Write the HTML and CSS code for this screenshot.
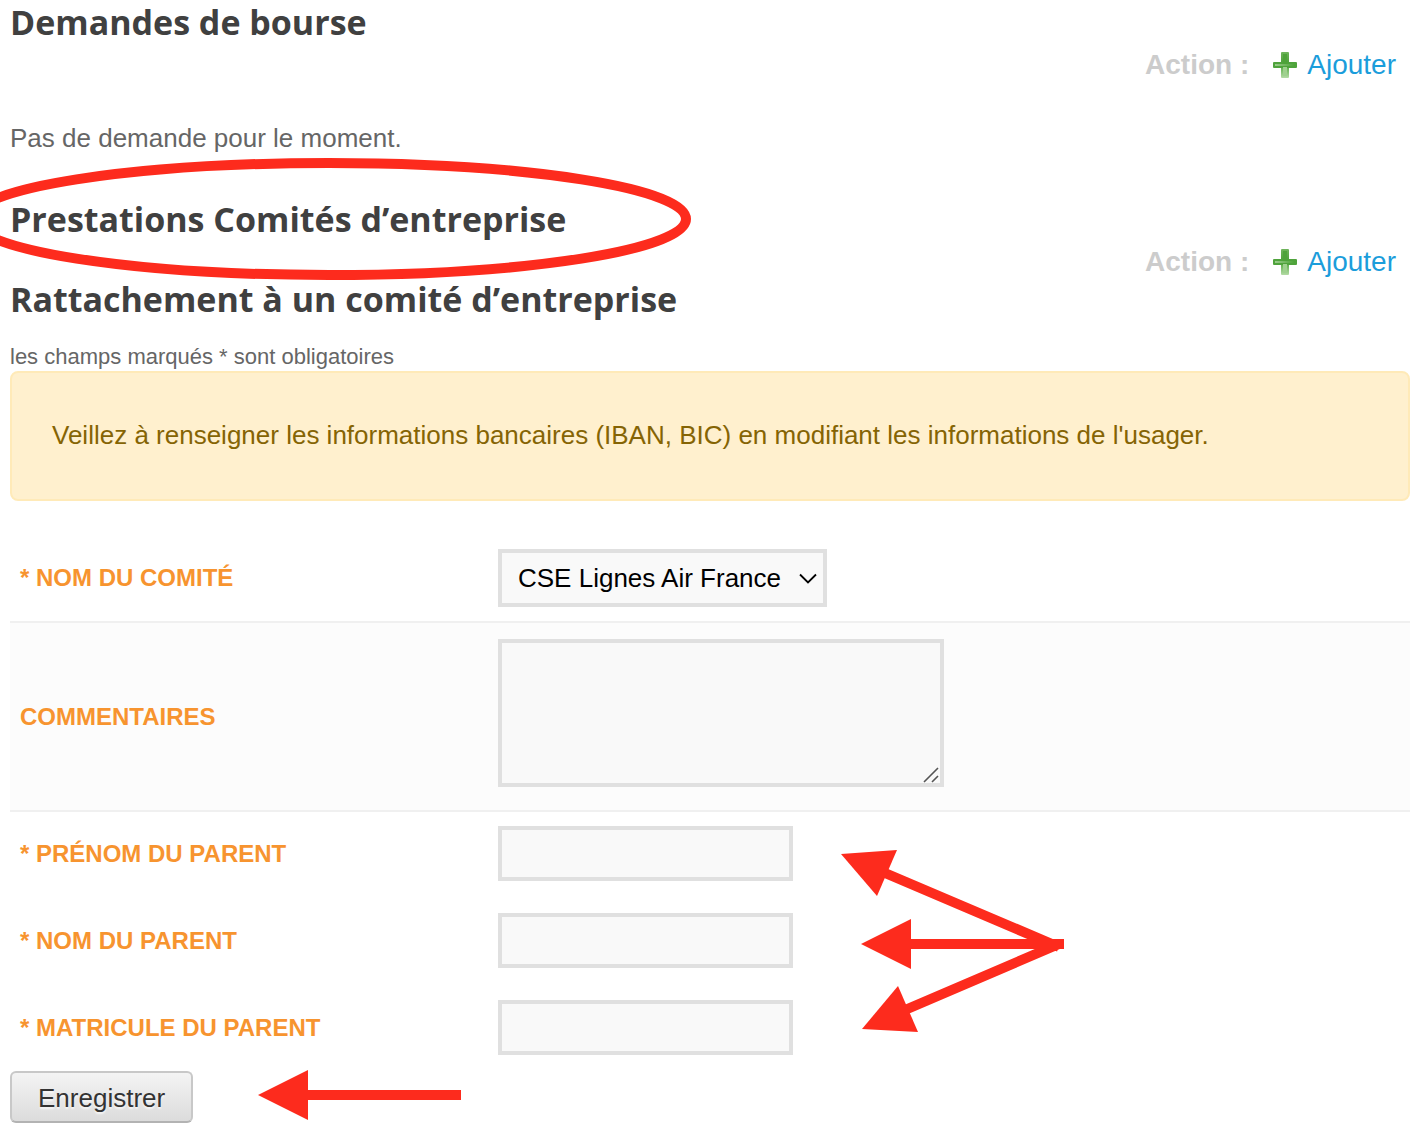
FILE: index.html
```html
<!DOCTYPE html>
<html lang="fr">
<head>
    <meta charset="UTF-8">
    <meta name="viewport" content="width=device-width, initial-scale=1.0">
    <title>Prestations Comités d’entreprise</title>
    <link rel="stylesheet" href="styles.css">
</head>
<body>
    <svg class="icon-defs" aria-hidden="true">
        <defs>
            <linearGradient id="plus-v" x1="0" y1="0" x2="0" y2="1">
                <stop offset="0" stop-color="#6fb45c"/>
                <stop offset="0.4" stop-color="#4ea23a"/>
                <stop offset="0.65" stop-color="#6cb659"/>
                <stop offset="1" stop-color="#b4dba6"/>
            </linearGradient>
            <linearGradient id="plus-h" x1="0" y1="0" x2="1" y2="0">
                <stop offset="0" stop-color="#9acb8b"/>
                <stop offset="1" stop-color="#4aa336"/>
            </linearGradient>
            <symbol id="icon-plus" viewBox="0 0 24 26">
                <rect x="8" y="0" width="8" height="26" rx="1" fill="url(#plus-v)"/>
                <rect x="0" y="10" width="24" height="6" rx="1" fill="#4fa33c"/>
                <rect x="2" y="12" width="20" height="2" fill="url(#plus-h)"/>
                <rect x="10" y="2" width="4" height="10" fill="#4ea23a"/>
                <rect x="10" y="15" width="4" height="9" fill="#9fd08f"/>
            </symbol>
        </defs>
    </svg>

    <main class="page">
        <section class="block">
            <h2>Demandes de bourse</h2>
            <div class="actions">
                <span class="actions-label">Action :</span>
                <a href="#bourse" class="add-link"><svg class="icon-plus" aria-hidden="true"><use href="#icon-plus"/></svg>Ajouter</a>
            </div>
            <p class="empty">Pas de demande pour le moment.</p>
        </section>

        <section class="block">
            <h2>Prestations Comités d’entreprise</h2>
            <div class="actions">
                <span class="actions-label">Action :</span>
                <a href="#comite" class="add-link"><svg class="icon-plus" aria-hidden="true"><use href="#icon-plus"/></svg>Ajouter</a>
            </div>
        </section>

        <section class="block">
            <h2>Rattachement à un comité d’entreprise</h2>
            <p class="required-note">les champs marqués * sont obligatoires</p>
            <div class="alert">Veillez à renseigner les informations bancaires (IBAN, BIC) en modifiant les informations de l'usager.</div>

            <form class="form">
                <div class="row">
                    <label for="comite">* Nom du comité</label>
                    <div class="select-wrap">
                        <select id="comite" name="comite">
                            <option>CSE Lignes Air France</option>
                        </select>
                        <svg class="chevron" viewBox="0 0 18 12" aria-hidden="true"><path d="M1 1.5 L9 9.5 L17 1.5" fill="none" stroke="#000" stroke-width="1.8"/></svg>
                    </div>
                </div>
                <div class="row row-comments">
                    <label for="commentaires">Commentaires</label>
                    <div class="textarea-wrap">
                        <textarea id="commentaires" name="commentaires"></textarea>
                        <svg class="grip" viewBox="0 0 16 16" aria-hidden="true"><path d="M1 15 L15 1 M9 15 L15 9" fill="none" stroke="#555" stroke-width="1.6"/></svg>
                    </div>
                </div>
                <div class="row">
                    <label for="prenom">* Prénom du parent</label>
                    <input type="text" id="prenom" name="prenom">
                </div>
                <div class="row">
                    <label for="nom">* Nom du parent</label>
                    <input type="text" id="nom" name="nom">
                </div>
                <div class="row">
                    <label for="matricule">* Matricule du parent</label>
                    <input type="text" id="matricule" name="matricule">
                </div>
                <button type="submit" class="btn">Enregistrer</button>
            </form>
        </section>

        <!-- red marks drawn over the form -->
        <svg class="marks" width="1080" height="1140" viewBox="0 0 1080 1140" aria-hidden="true">
            <ellipse cx="329" cy="219" rx="357" ry="56"/>
            <path d="M885 873 L1059 947 M908 944 H1064 M905 1010 L1059 944 M305 1095 H461"/>
            <polygon points="841,854 897,850 877,896"/>
            <polygon points="861,944 911,919 911,969"/>
            <polygon points="862,1029 898,986 918,1032"/>
            <polygon points="258,1095 308,1070 308,1120"/>
        </svg>
    </main>
</body>
</html>
```
FILE: styles.css
```css
* {
    box-sizing: border-box;
}

body {
    margin: 0;
    background: #fff;
    color: #666;
    font-family: Arial, "Liberation Sans", sans-serif;
    font-size: 26px;
    line-height: 36px;
}

.icon-defs {
    position: absolute;
    width: 0;
    height: 0;
}

.page {
    position: relative;
    padding: 1px 16px 24px 10px;
}

h2 {
    margin: 0;
    color: #404040;
    font-family: "Trebuchet MS", "Open Sans", sans-serif;
    font-size: 34px;
    font-weight: bold;
    line-height: 42px;
}

.actions {
    display: flex;
    justify-content: flex-end;
    gap: 24px;
    margin-top: 6px;
    padding-right: 14px;
    font-size: 28px;
    line-height: 32px;
}

.actions-label {
    color: #ccc;
    font-weight: bold;
}

.add-link {
    display: flex;
    align-items: center;
    gap: 10px;
    color: #1b9ddb;
    text-decoration: none;
}

.icon-plus {
    width: 24px;
    height: 26px;
}

.empty {
    margin: 39px 0 42px;
}

.required-note {
    margin: 23px 0 0;
    font-size: 22px;
    line-height: 28px;
}

.alert {
    padding: 44px 40px 46px;
    border: 2px solid #ffeab8;
    border-radius: 8px;
    background: #fff0ce;
    color: #856404;
}

.form {
    margin-top: 32px;
}

.row {
    display: grid;
    grid-template-columns: 478px 1fr;
    align-items: center;
    justify-items: start;
    padding: 16px 10px;
}

.row:first-child {
    padding-bottom: 14px;
}

.row-comments {
    border-top: 2px solid #f0f0f0;
    border-bottom: 2px solid #f0f0f0;
    background: #fcfcfc;
}

.row-comments + .row {
    padding-top: 14px;
}

label {
    color: #f7942f;
    font-size: 24px;
    font-weight: bold;
    text-transform: uppercase;
}

input,
select,
textarea {
    display: block;
    border: 4px solid #e0e0e0;
    border-radius: 0;
    background: #f9f9f9;
    color: #000;
    font-family: inherit;
    font-size: 26px;
}

input {
    width: 295px;
    height: 55px;
    padding: 8px;
}

.textarea-wrap {
    position: relative;
    padding-bottom: 7px;
}

textarea {
    width: 446px;
    height: 148px;
    padding: 8px;
    resize: none;
}

.grip {
    position: absolute;
    right: 5px;
    bottom: 11px;
    width: 16px;
    height: 16px;
    pointer-events: none;
}

.select-wrap {
    position: relative;
}

select {
    width: 329px;
    height: 58px;
    padding: 0 40px 0 16px;
    appearance: none;
}

.chevron {
    position: absolute;
    top: 24px;
    right: 10px;
    width: 18px;
    height: 12px;
    pointer-events: none;
}

.btn {
    display: block;
    height: 52px;
    padding: 2px 26px 0;
    border: 2px solid #c8c8c8;
    border-bottom-color: #b3b3b3;
    border-radius: 6px;
    background: linear-gradient(#f4f4f4, #dcdcdc);
    color: #333;
    font-family: inherit;
    font-size: 26px;
    text-shadow: 0 2px 2px rgba(255, 255, 255, 0.75);
    cursor: pointer;
}

.marks {
    position: absolute;
    top: 0;
    left: 0;
    pointer-events: none;
}

.marks ellipse,
.marks path {
    fill: none;
    stroke: #fd2b1d;
    stroke-width: 10;
}

.marks polygon {
    fill: #fd2b1d;
}
```
